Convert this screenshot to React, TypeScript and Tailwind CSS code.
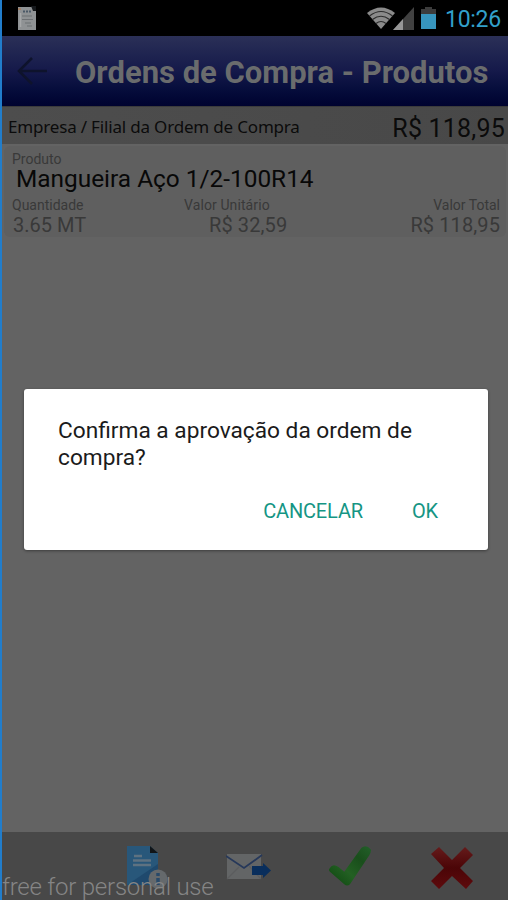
import { useState } from 'react'

interface Produto {
  nome: string;
  quantidade: string;
  valorUnitario: string;
  valorTotal: string;
}

const produtos: Produto[] = [
  { nome: 'Mangueira Aço 1/2-100R14', quantidade: '3.65 MT', valorUnitario: 'R$ 32,59', valorTotal: 'R$ 118,95' },
]

const StatusBar = () => (
  <div className="flex h-9 shrink-0 items-center bg-black pl-[15px] pr-[6px]">
    <svg width="20" height="25" viewBox="0 0 20 25">
      <path d="M1 1h14l4 4v19H1z" fill="#8f9294" />
      <path d="M14 0h5v5h-3z" fill="#15181b" />
      <path d="M6 5.500h8" stroke="#4a5866" strokeWidth="2" strokeDasharray="2 1" />
      <path d="M5 10h10M5 13.500h11M8 17h6M10 20h5" stroke="#6d7073" strokeWidth="1.200" />
      <path d="M3.500 7v14" stroke="#a5a7a8" strokeWidth="1.500" />
      <path d="M1 3h3" stroke="#a87c5c" strokeWidth="1.500" />
    </svg>
    <div className="ml-auto flex items-center">
      <svg width="28" height="22" viewBox="0 0 28 22">
        <path d="M0 6Q14 -5 28 6L14 22z" fill="#8b8b8b" />
        <path d="M2.500 9Q14 0 25.500 9M5.500 12.500Q14 6 22.500 12.500M9 16.500Q14 12.500 19 16.500" fill="none" stroke="#2c2c2c" strokeWidth="1.200" />
      </svg>
      <svg className="-ml-[2px]" width="21" height="23" viewBox="0 0 21 23">
        <path d="M0 23L21 0V23z" fill="#414141" />
        <path d="M0 23L10 12V23z" fill="#969696" />
      </svg>
      <svg className="ml-[7px]" width="15" height="22" viewBox="0 0 15 22">
        <path d="M0 2h4V0h7v2h4v6H0z" fill="#3c3c3c" />
        <path d="M0 7h15v15H0z" fill="#3795bd" />
      </svg>
      <span className="ml-[9px] w-[57px] whitespace-nowrap pt-[3px] text-[23px] leading-9 tracking-[-0.3px] text-[#32a0cb]">10:26</span>
    </div>
  </div>
)

const Header = () => (
  <div className="flex h-[70px] shrink-0 items-center bg-linear-to-b from-[#2b3057] via-[#15194a] to-[#00032f] pl-[15px]">
    <svg width="30" height="28" viewBox="0 0 30 28" fill="none" stroke="#0e132c" strokeWidth="2.600">
      <path d="M15 1L2 14l13 13M2 14h28" />
    </svg>
    <h1 className="ml-[28px] whitespace-nowrap pt-[4px] text-[31px] font-bold text-[#6a6c6d]">Ordens de Compra - Produtos</h1>
  </div>
)

const ProdutoCard = ({ produto }: { produto: Produto }) => (
  <div className="mx-[2px] mt-[2px] h-[91px] rounded-md bg-[#5f5f5f] pl-[8px] pr-[6px] pt-[5px]">
    <p className="text-[14px] leading-[16px] text-[#393939]">Produto</p>
    <p className="h-[30px] pl-[4px] text-[24.4px] leading-[24px] text-[#080808]">{produto.nome}</p>
    <div className="grid grid-cols-[172px_1fr_1fr] text-[14px] leading-[16px] text-[#393939]">
      <div>
        <p>Quantidade</p>
        <p className="pl-px text-[20px] leading-[24px]">{produto.quantidade}</p>
      </div>
      <div>
        <p className="tracking-[0.1px]">Valor Unitário</p>
        <p className="pl-[25px] text-[20px] leading-[24px] tracking-[0.1px]">{produto.valorUnitario}</p>
      </div>
      <div className="text-right">
        <p>Valor Total</p>
        <p className="text-[20px] leading-[24px] tracking-[0.1px]">{produto.valorTotal}</p>
      </div>
    </div>
  </div>
)

const Toolbar = () => (
  <div className="flex h-[68px] shrink-0 items-start bg-[#484848] pl-[124px] pt-[13px]">
    <button aria-label="Detalhes">
      <svg width="42" height="44" viewBox="0 0 42 44">
        <path d="M1 1h23l8 7v32H1z" fill="#28577a" />
        <path d="M1 40L32 19v21z" fill="#1f496d" />
        <path d="M24 1l8 7h-8z" fill="#101417" />
        <path d="M8 11h8M7 15.500h18M7 20h18" stroke="#5e7281" strokeWidth="2.500" />
        <circle cx="32" cy="34" r="9.500" fill="#65696c" />
        <path d="M32 28v3M32 33v7" stroke="#28496a" strokeWidth="3.500" />
      </svg>
    </button>
    <button className="ml-[58px] mt-[8px]" aria-label="Enviar">
      <svg width="46" height="28" viewBox="0 0 46 28">
        <path d="M1 1h34v25H1z" fill="#636566" />
        <path d="M1 26l12-12M35 26L23 13" stroke="#5b5c5e" strokeWidth="1.200" />
        <path d="M0 3l18 12L36 2" fill="none" stroke="#26385a" strokeWidth="1.800" />
        <path d="M26 13h11V10l8 7.500L37 25v-3H26z" fill="#092e5c" />
      </svg>
    </button>
    <button className="ml-[56px]" aria-label="Aprovar">
      <svg width="44" height="42" viewBox="0 0 46 42">
        <defs>
          <linearGradient id="check" x1="0" y1="1" x2="1" y2="0">
            <stop offset="0" stopColor="#0b430d" />
            <stop offset=".4" stopColor="#236023" />
            <stop offset=".7" stopColor="#194e1b" />
            <stop offset="1" stopColor="#23602a" />
          </linearGradient>
        </defs>
        <path d="M2 23Q5 18 11 22L17 27L35 2Q40 -2 45 4Q45 7 43 10L23 40Q20 43 17 40L2 27Q0 25 2 23Z" fill="url(#check)" />
      </svg>
    </button>
    <button className="ml-[59px] mt-[2px]" aria-label="Rejeitar">
      <svg width="42" height="42" viewBox="0 0 42 42">
        <defs>
          <linearGradient id="cross" x1="0" y1="0" x2="0" y2="1">
            <stop offset="0" stopColor="#651b1b" />
            <stop offset=".5" stopColor="#4b0507" />
            <stop offset="1" stopColor="#5e0b0d" />
          </linearGradient>
        </defs>
        <path d="M8 0l13 13L34 0l8 8-13 13 13 13-7 8-14-13L8 42l-8-8 13-13L0 7z" fill="url(#cross)" />
      </svg>
    </button>
  </div>
)

const App = () => {
  const [open, setOpen] = useState(true)

  return (
    <div className="relative flex h-[900px] w-[508px] flex-col overflow-hidden border-l-2 border-[#217dcb] bg-[#636363] font-['Roboto',sans-serif]">
      <StatusBar />
      <Header />
      <div className="flex h-[38px] shrink-0 items-center justify-between border-t border-[#3b3b3b] bg-linear-to-r from-[#4d4d4d] to-[#484848] pl-[6px] pr-[3px] text-[#0b0b0b]">
        <span className="whitespace-nowrap pt-[3px] font-['Noto_Sans',sans-serif] text-[17px] tracking-[-0.18px]">Empresa / Filial da Ordem de Compra</span>
        <span className="whitespace-nowrap pt-[6px] text-[25px] tracking-[0.2px]">R$ 118,95</span>
      </div>
      <div className="flex-1">
        {produtos.map((produto, index) => (
          <ProdutoCard key={index} produto={produto} />
        ))}
      </div>
      <Toolbar />

      <span className="absolute left-0 top-[875px] whitespace-nowrap text-[24px] font-light leading-[24px] tracking-[-0.23px] text-[#858585]">free for personal use</span>

      {open && (
        <div className="absolute left-[22px] top-[389px] flex h-[161px] w-[464px] flex-col rounded-[3px] bg-white pl-[34px] pr-[50px] pt-[28px] shadow-[0_1px_3px_rgba(0,0,0,0.4)]">
          <p className="text-[22.7px] leading-[27px] text-[#1b1b1b]">Confirma a aprovação da ordem de compra?</p>
          <div className="mt-[27px] flex justify-end gap-[49px] text-[20px] leading-[27px] tracking-[-0.15px] text-[#159584]">
            <button onClick={() => setOpen(false)}>CANCELAR</button>
            <button onClick={() => setOpen(false)}>OK</button>
          </div>
        </div>
      )}
    </div>
  )
}

export default App
